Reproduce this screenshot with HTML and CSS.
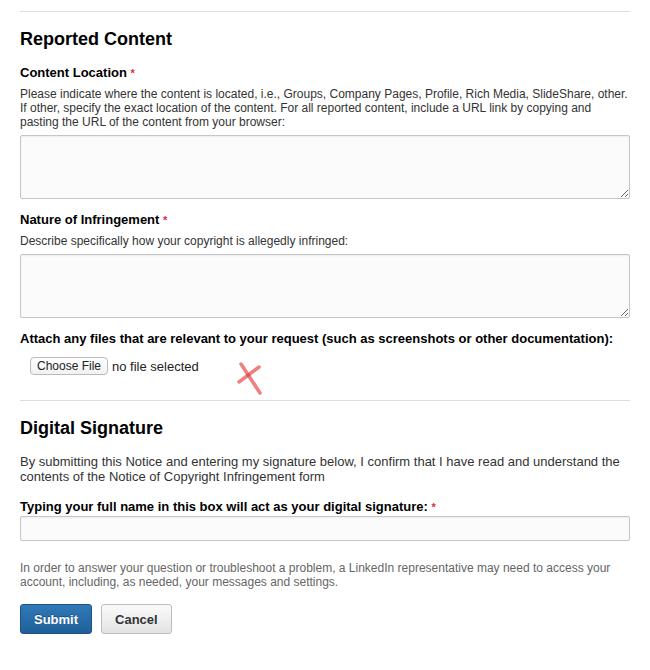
FILE: index.html
```html
<!DOCTYPE html>
<html lang="en">

<head>
  <meta charset="UTF-8">
  <meta name="viewport" content="width=device-width, initial-scale=1.0">
  <title>Notice of Copyright Infringement</title>
  <link rel="stylesheet" href="styles.css">
</head>

<body>
  <form class="page">
    <hr class="divider">

    <!-- Reported Content -->
    <h2 class="section-title">Reported Content</h2>

    <label class="field-label" for="content_location">Content Location <span class="req">*</span></label>
    <p class="field-help">Please indicate where the content is located, i.e., Groups, Company Pages, Profile, Rich Media, SlideShare, other. If other, specify the exact location of the content. For all reported content, include a URL link by copying and pasting the URL of the content from your browser:</p>
    <textarea class="field-area" id="content_location"></textarea>

    <label class="field-label" for="nature">Nature of Infringement <span class="req">*</span></label>
    <p class="field-help">Describe specifically how your copyright is allegedly infringed:</p>
    <textarea class="field-area" id="nature"></textarea>

    <label class="field-label">Attach any files that are relevant to your request (such as screenshots or other documentation):</label>
    <div class="file-row">
      <button type="button" class="file-button">Choose File</button>
      <span class="file-name">no file selected</span>
      <!-- hand drawn mark -->
      <svg class="scribble" width="30" height="34" viewBox="0 0 30 34">
        <path d="M4 2 L23 31" />
        <path d="M22 5 L2 20" />
      </svg>
    </div>

    <hr class="divider">

    <!-- Digital Signature -->
    <h2 class="section-title sig-title">Digital Signature</h2>
    <p class="sig-text">By submitting this Notice and entering my signature below, I confirm that I have read and understand the contents of the Notice of Copyright Infringement form</p>

    <label class="field-label sig-label" for="signature">Typing your full name in this box will act as your digital signature: <span class="req">*</span></label>
    <input type="text" class="field-input" id="signature">

    <p class="footnote">In order to answer your question or troubleshoot a problem, a LinkedIn representative may need to access your account, including, as needed, your messages and settings.</p>

    <div class="actions">
      <button type="submit" class="btn btn-primary">Submit</button>
      <button type="button" class="btn btn-secondary">Cancel</button>
    </div>
  </form>
</body>

</html>
```

FILE: styles.css
```css
body {
  margin: 0;
  background-color: #fff;
  font-family: 'Liberation Sans', Arial, sans-serif;
  color: #000;
}

.page {
  padding: 0 20px 30px;
}

.divider {
  margin: 11px 0 0;
  border: none;
  border-top: 1px solid #ddd;
  height: 0;
}

.section-title {
  margin: 16px 0 0;
  font-size: 18px;
  line-height: 22px;
  font-weight: bold;
}

.field-label {
  display: block;
  margin-top: 15px;
  font-size: 13px;
  line-height: 16px;
  font-weight: bold;
}

.req {
  color: #dd2c3c;
  font-size: 11px;
}

.field-help {
  margin: 6px 0 6px;
  font-size: 12px;
  line-height: 14px;
  color: #333;
}

.field-area {
  display: block;
  box-sizing: border-box;
  width: 100%;
  height: 64px;
  margin: 0 0 13px;
  border: 1px solid #c6c6c6;
  border-radius: 2px;
  background-color: #fbfbfb;
  box-shadow: inset 0 1px 2px rgba(0, 0, 0, 0.06);
  font-family: inherit;
  font-size: 13px;
}

.field-area + .field-label {
  margin-top: 0;
}

.file-row {
  position: relative;
  display: flex;
  align-items: center;
  margin: 6px 0 0 10px;
  height: 26px;
}

.file-button {
  height: 18px;
  padding: 0 6px;
  border: 1px solid #bbb;
  border-radius: 4px;
  background: linear-gradient(#fff, #f1f1f1);
  font-family: inherit;
  font-size: 12px;
  line-height: 16px;
  color: #222;
}

.file-name {
  margin-left: 4px;
  font-size: 13px;
  color: #222;
}

.scribble {
  position: absolute;
  left: 207px;
  top: 9px;
  filter: blur(0.7px);
}

.scribble path {
  stroke: rgba(228, 60, 60, 0.65);
  stroke-width: 3.5;
  stroke-linecap: round;
  fill: none;
}

.file-row + .divider {
  margin-top: 21px;
}

.sig-title {
  margin-top: 16px;
}

.sig-text {
  margin: 15px 0 0;
  font-size: 13px;
  line-height: 15px;
  color: #333;
}

.sig-label {
  margin-top: 15px;
}

.field-input {
  display: block;
  box-sizing: border-box;
  width: 100%;
  height: 25px;
  margin-top: 1px;
  border: 1px solid #c6c6c6;
  border-radius: 2px;
  background-color: #fbfbfb;
  box-shadow: inset 0 1px 2px rgba(0, 0, 0, 0.06);
}

.footnote {
  margin: 20px 0 0;
  font-size: 12px;
  line-height: 14px;
  color: #666;
}

.actions {
  display: flex;
  gap: 9px;
  margin-top: 15px;
}

.btn {
  height: 30px;
  padding: 0 13px;
  border-radius: 3px;
  font-family: inherit;
  font-size: 13px;
  font-weight: bold;
  cursor: pointer;
}

.btn-primary {
  border: 1px solid #1b5488;
  background: linear-gradient(#3079b8, #1f5f98);
  color: #fff;
  text-shadow: 0 -1px 0 rgba(0, 0, 0, 0.3);
}

.btn-secondary {
  border: 1px solid #bdbdbd;
  background: linear-gradient(#fafafa, #e3e3e3);
  color: #333;
}
```
